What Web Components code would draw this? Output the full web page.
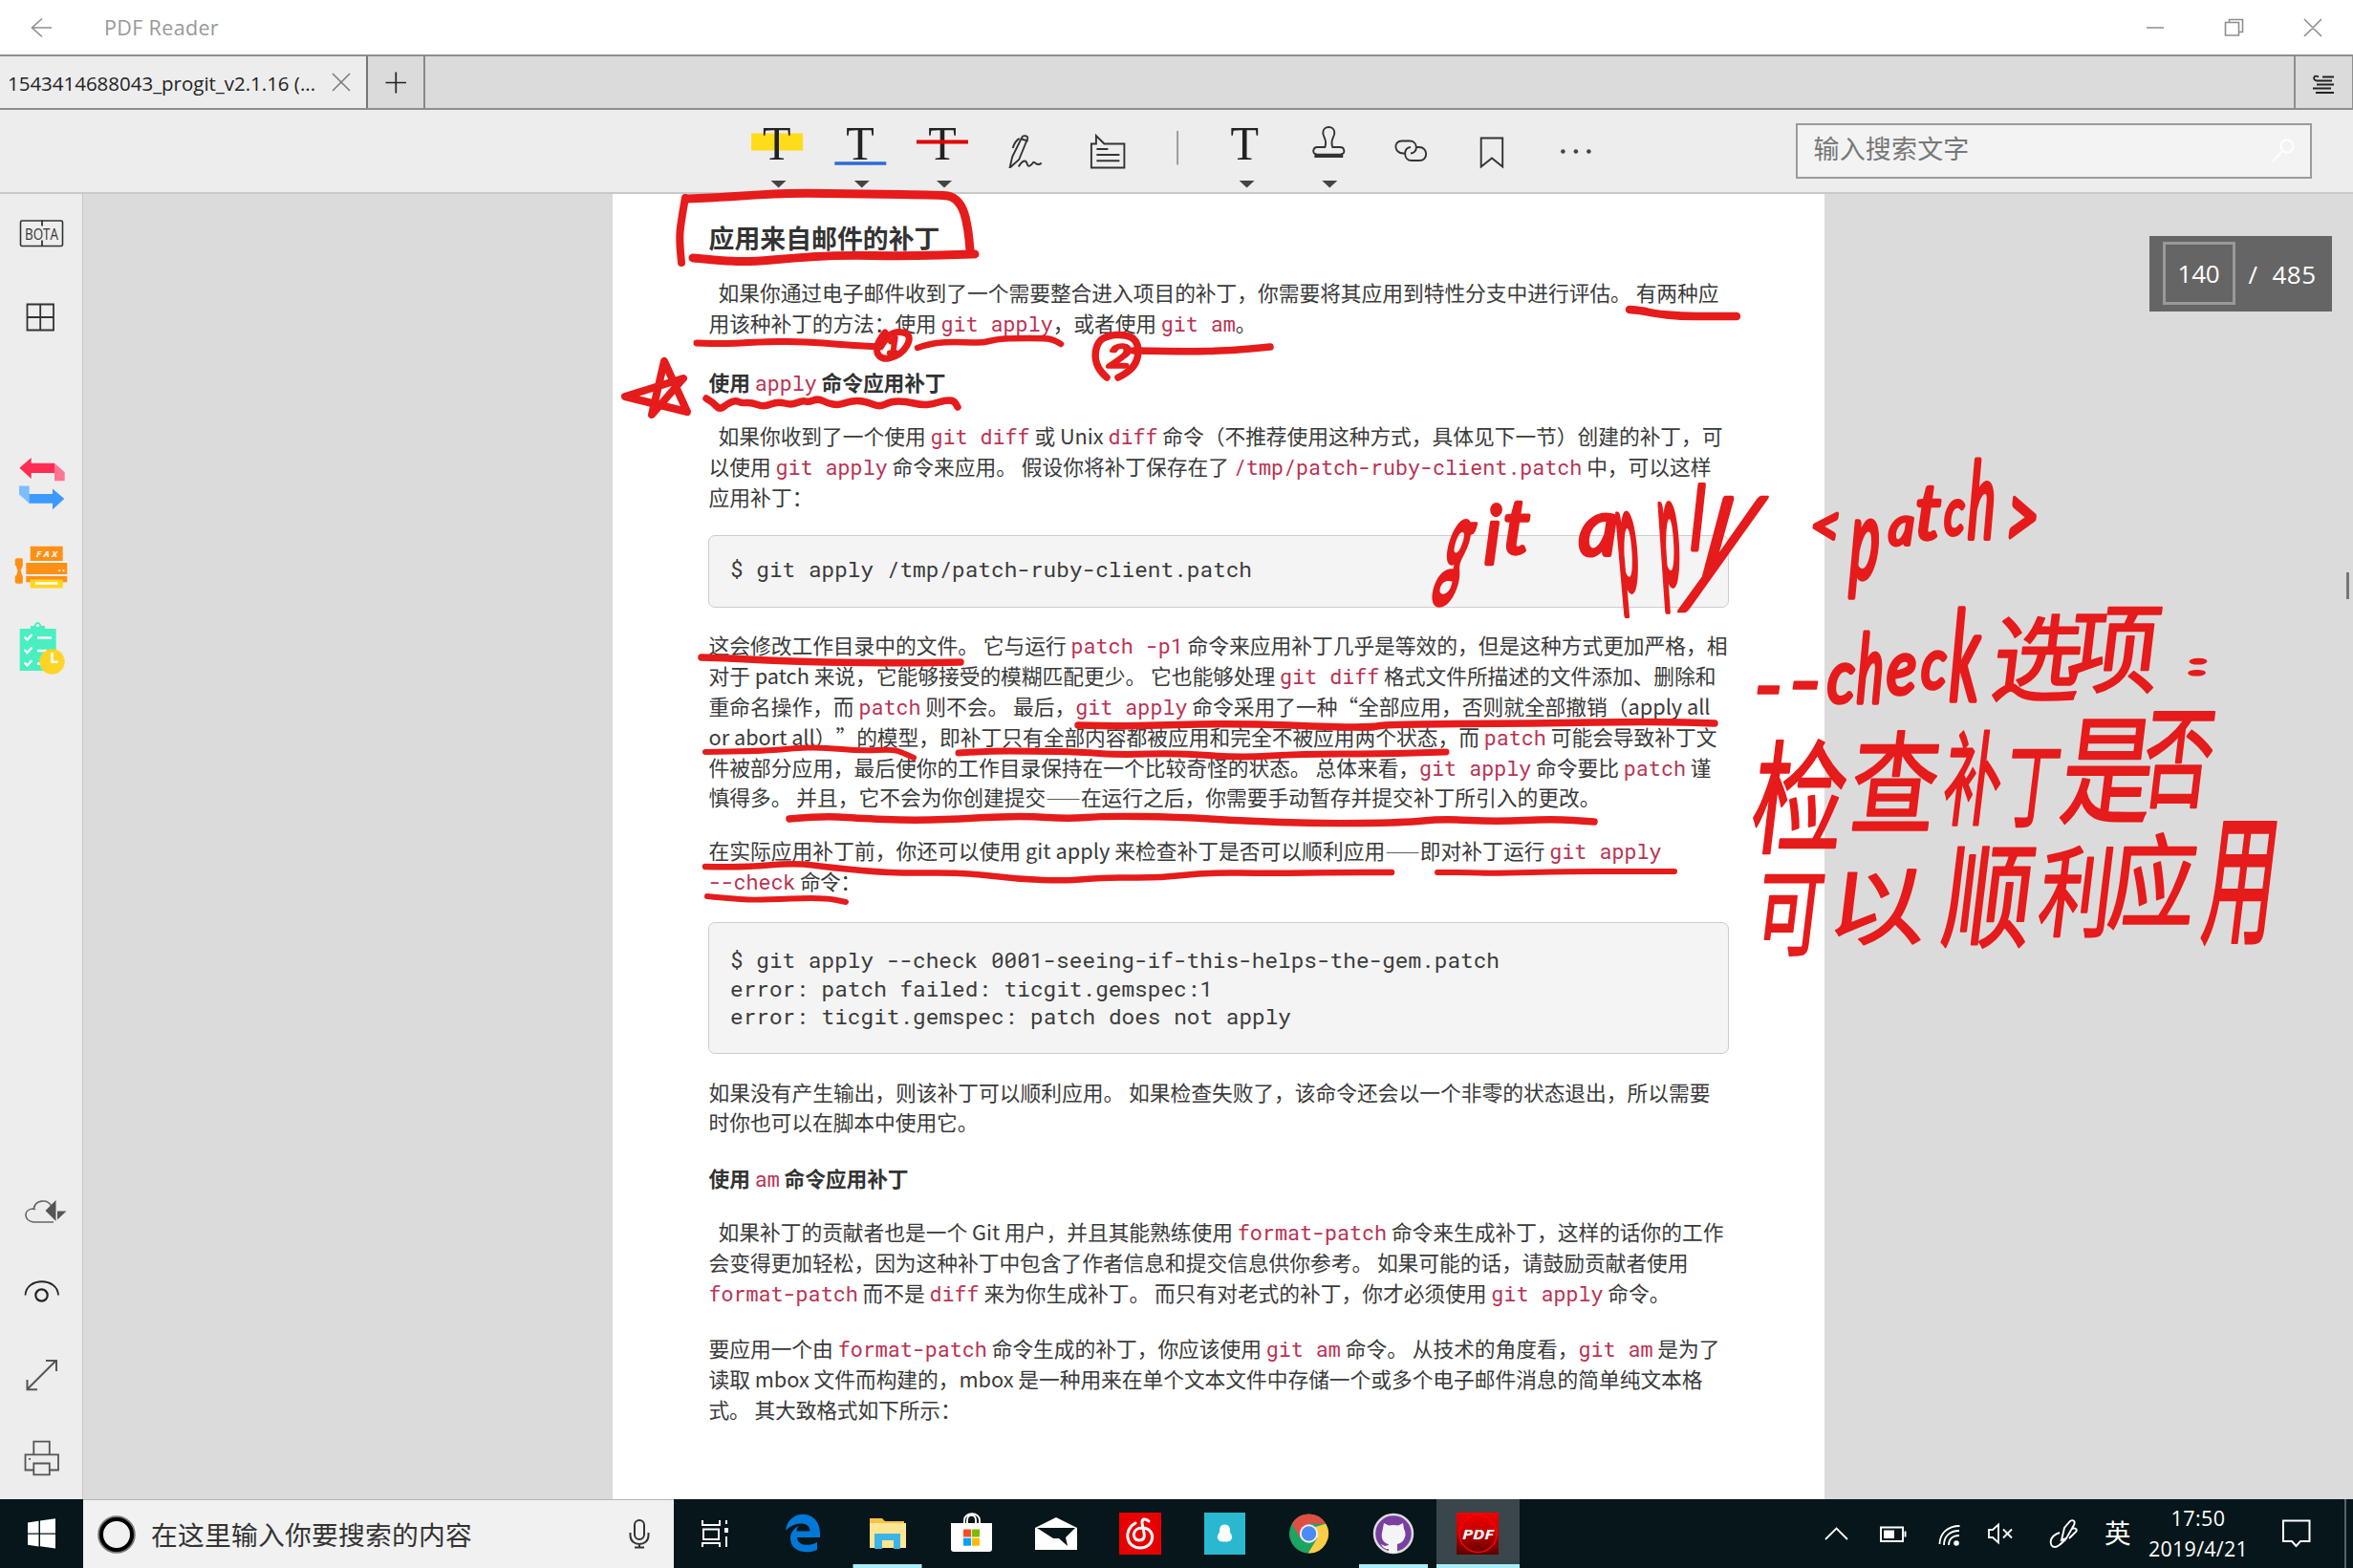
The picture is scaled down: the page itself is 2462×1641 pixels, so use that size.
<!DOCTYPE html>
<html lang="zh-CN">
<head>
<meta charset="utf-8">
<title>PDF Reader</title>
<style>
html,body{margin:0;padding:0;width:2462px;height:1641px;overflow:hidden;background:#dbdbdb;font-family:"Noto Sans CJK SC",sans-serif}
</style>
</head>
<body>
<reader-app></reader-app>

<script>
const UI = '"Open Sans","Noto Sans CJK SC",sans-serif';
const lines = [];
function define(name, html, setup) {
  const tpl = document.createElement('template');
  tpl.innerHTML = html;
  customElements.define(name, class extends HTMLElement {
    connectedCallback() {
      if (this.shadowRoot) return;
      this.attachShadow({mode: 'open'}).appendChild(tpl.content.cloneNode(true));
      if (setup) setup(this, this.shadowRoot);
    }
  });
}

/* Tracks a line so that it fills the width in its "w" attribute */
function fitLine(el) {
  const w = parseFloat(el.getAttribute('w'));
  const span = el.shadowRoot.querySelector('span');
  let n = el.textContent.length;
  el.querySelectorAll('code-token').forEach(c => n -= c.textContent.length);
  if (!w || n < 1) return;
  span.style.letterSpacing = ((w - span.getBoundingClientRect().width) / n) + 'px';
}

/* Inline monospace token inside a paragraph */
define('code-token', `<style>:host{font-family:"Roboto Mono","Noto Sans Mono","Noto Sans Mono CJK SC","Liberation Mono",monospace;color:#ba3253;font-size:21.7px;font-weight:400;line-height:0;letter-spacing:0}</style><slot></slot>`);

define('text-line', `<style>:host{display:block;white-space:pre;height:var(--lh,auto);line-height:var(--lh,normal);text-spacing-trim:space-all}span{display:inline-block}</style><span><slot></slot></span>`,
  el => lines.push(el));

define('title-bar', `<style>
:host{display:flex;align-items:center;justify-content:space-between;height:57px;background:#fff;font:21.5px ${UI};color:#999;border-bottom:2px solid #8e8e8e}
div{display:flex;align-items:center}text-line{margin-left:24px}
svg{display:block;fill:none;stroke:#8e8e8e;stroke-width:1.6}
</style>
<div><svg width="85" height="57"><path d="M54 29H33.5M44 19.5L33.5 29L44 38.5"/></svg><text-line w="120">PDF Reader</text-line></div>
<svg width="262" height="57" viewBox="2200 0 262 57"><path d="M2246 29h18M2328.500 23.500h14v13.500h-14zM2332.500 23.500v-3h14v13h-4M2411 20l18 18M2429 20l-18 18"/></svg>`);

define('tab-bar', `<style>
:host{display:flex;height:54px;border-bottom:2px solid #8e8e8e;background:#dbdbdb;font:20.5px ${UI};color:#222}
.tab{display:flex;align-items:center;box-sizing:border-box;width:385px;padding-left:8px;background:#ededed;border-right:2px solid #777}
.tab svg{margin-left:17px}
.tab text-line{margin-top:2px}
.add{width:58px;border-right:2px solid #888}.fill{flex:1}
.more{width:59px;border-left:2px solid #8e8e8e;border-right:1px solid #8e8e8e}
svg{display:block;fill:none}
</style>
<div class="tab"><text-line w="322">1543414688043_progit_v2.1.16 (...</text-line><svg width="20" height="20" stroke="#777" stroke-width="1.5"><path d="M1 1L19 19M19 1L1 19"/></svg></div>
<div class="add"><svg width="58" height="54" viewBox="385 59 58 54" stroke="#222" stroke-width="1.7"><path d="M403.500 86.500h21.500M414.300 75.500v22"/></svg></div>
<div class="fill"></div>
<div class="more"><svg width="59" height="54" viewBox="2402 59 59 54" stroke="#222" stroke-width="1.8"><path d="M2430 80.500h12M2424 84.500h16M2424 88.500h18M2420 92.500h19M2423 97h19M2424 84.500c-5-1-3-7 2-4"/></svg></div>`);

define('tool-bar', `<style>
:host{display:flex;height:86px;border-bottom:2px solid #c9c9c9;background:#ededed;color:#777;font:27px ${UI}}
.tools{display:flex;margin-left:770.4px;flex:1}
svg{display:block;flex:none;fill:none;stroke:#333;stroke-width:1.9}
text{font-family:"Liberation Serif",serif;font-size:51px;fill:#222;stroke:none}
.c{fill:#444;stroke:none}
.box{display:flex;align-items:center;box-sizing:border-box;width:540px;height:58px;margin:14px 43.500px 0 0;border:2px solid #9b9b9b;background:#f3f3f3;padding:0 16px 0 17px;justify-content:space-between}
.box text-line{margin-top:-7px}
.box svg{stroke:#fff;stroke-width:2}
</style>
<div class="tools">
<svg width="86.300" height="86" viewBox="770.400 115 86.300 86"><path d="M786.500 139.500h54v18h-54z" fill="#ffdc1a" stroke="none"/><text x="798.500" y="167" textLength="29.500" lengthAdjust="spacingAndGlyphs">T</text><path class="c" d="M807 189h16l-8 7.500z"/></svg>
<svg width="86.300" height="86" viewBox="856.700 115 86.300 86"><text x="885" y="167" textLength="29.500" lengthAdjust="spacingAndGlyphs">T</text><path d="M873 171h54" stroke="#2b6cd4" stroke-width="3.600"/><path class="c" d="M893.500 189h16l-8 7.500z"/></svg>
<svg width="86.300" height="86" viewBox="943 115 86.300 86"><text x="971.300" y="167" textLength="29.500" lengthAdjust="spacingAndGlyphs">T</text><path d="M959 148.500h54" stroke="#e00000" stroke-width="4"/><path class="c" d="M980 189h16l-8 7.500z"/></svg>
<svg width="86.300" height="86" viewBox="1029.300 115 86.300 86" stroke-width="2.100"><path d="M1057 175l2.500-11 10-20c1-3 7-2 6 1l-9 22-9 8zM1069 145.500l7 2M1067 145c-3 1-6 6-7 10M1066 174.500c5-8 8-7 9-3s4 2 6-1 4 5 9 0"/></svg>
<svg width="86.300" height="86" viewBox="1115.600 115 86.300 86"><path d="M1141.500 150.500h5v-8.500l8.500 8.500h21v25h-34.500zM1147 156h12M1147 162h24M1147 168.300h24"/></svg>
<svg width="57.500" height="86" viewBox="1201.900 115 57.500 86"><path d="M1232 137v35.500" stroke="#999"/></svg>
<svg width="86.300" height="86" viewBox="1259.400 115 86.300 86"><text x="1288" y="167" textLength="29.500" lengthAdjust="spacingAndGlyphs">T</text><path class="c" d="M1297 189h16l-8 7.500z"/></svg>
<svg width="86.300" height="86" viewBox="1345.700 115 86.300 86"><path d="M1386 154c3-8-2-10-2-15 0-8 12-8 12 0 0 5-5 7-2 15h8c5 0 5 7 2 7v3h-28v-3c-3 0-3-7 2-7z"/><path d="M1376 162.500h28" stroke-width="3.500"/><path class="c" d="M1383 189h16l-8 7.500z"/></svg>
<svg width="86.300" height="86" viewBox="1432 115 86.300 86" stroke-width="2.300"><path d="M1470 160.500h-2c-9 0-11-13-1-13h8c9 0 9 13 1 13M1482 154h3c9 0 10 14 0 14h-8c-9 0-9-14-1-14"/></svg>
<svg width="86.300" height="86" viewBox="1518.300 115 86.300 86"><path d="M1550 144.500h22.500v30l-11.200-9-11.300 9z"/></svg>
<svg width="86.300" height="86" viewBox="1604.600 115 86.300 86"><g class="c"><circle cx="1635" cy="158.500" r="2.300"/><circle cx="1648.500" cy="158.500" r="2.300"/><circle cx="1662" cy="158.500" r="2.300"/></g></svg>
</div>
<div class="box"><text-line w="163">输入搜索文字</text-line><svg width="24" height="26"><circle cx="16" cy="8" r="6.500"/><path d="M11 13L1 24"/></svg></div>`);

define('side-bar', `<style>
:host{display:block;box-sizing:border-box;width:87px;background:#ededed;border-right:1.500px solid #c6c6c6}
svg{display:block;fill:none;stroke:#333;stroke-width:1.800}
text{stroke:none;font-family:${UI}}
</style>
<svg style="margin-top:10.500px" width="85" height="60" viewBox="0 213.500 85 60"><rect x="21.500" y="230.500" width="44" height="26.500" rx="1.500" stroke-width="1.600"/><path d="M44 230v6M44 251v6"/><text x="26" y="250.300" font-size="15.500" textLength="35" lengthAdjust="spacingAndGlyphs" fill="#333">BOTA</text></svg>
<svg style="margin-top:28px" width="85" height="60" viewBox="0 301.500 85 60" stroke-width="2.200"><path d="M28.500 318h27.500v27h-27.500zM42.200 318v27M28.500 331.500h27.500"/></svg>
<svg style="margin-top:114px" width="85" height="60" viewBox="0 475.500 85 60" stroke="none"><path d="M20.300 489.300L32.700 478.500v5.800H57v10.200H32.700v6z" fill="#ff2d55" stroke="none"/><path d="M57 484.300l10.700 9.500v9H57z" fill="#ff7591" stroke="none"/><path d="M67.300 521.500L55 511v5.600H30v9.700h25v6.500z" fill="#3c99ff" stroke="none"/><path d="M20 508h10.700v18.300L20 517z" fill="#7dbdff" stroke="none"/></svg>
<svg style="margin-top:26.500px" width="85" height="60" viewBox="0 562 85 60"><g stroke="none"><path d="M31.700 571.700h34v15.500h-34zM27.300 589h43v12h-43zM27.300 603h43v6.300h-43zM17 584.500h6.500v8.500l-1.800 4 1.800 6v7.500H17V603l1.500-6-1.500-4z" fill="#ff9017"/><path d="M15.700 586q0-1.500 1.500-1.500h5q1.500 0 1.500 1.500v6h-8zM15.700 602.500h8v6q0 2-1.500 2h-5q-1.500 0-1.500-2z" fill="#ff9017"/><path d="M31.700 606.500h34v9h-34z" fill="#ffd61f"/><path d="M28 587.300h42.500v1.200H28zM37 609.300h23.300v2.500H37z" fill="#fff"/><circle cx="62" cy="597" r="1" fill="#fff"/><circle cx="66.500" cy="597" r="1" fill="#fff"/></g><text x="38" y="583.300" font-size="9.500" font-weight="700" font-style="italic" textLength="22" fill="#fff">FAX</text></svg>
<svg style="margin-top:28px" width="85" height="60" viewBox="0 650 85 60"><path d="M20.700 658h11.300v-3h3.700c1-5.500 6.500-5.500 7.500 0h3.800v3h11.700v44H20.700z" fill="#49efc0" stroke="none"/><circle cx="39.500" cy="654.700" r="1.600" fill="#fff" stroke="none"/><path d="M25.500 666.500l3 3 5-5.500M25.500 680l3 3 5-5.500M25.500 693.500l3 3 5-5.500M39 667.500h15M39 681h10M39 694.500h5" stroke="#fff" stroke-width="2.300"/><circle cx="54.500" cy="692.500" r="13.200" fill="#ffd426" stroke="none"/><path d="M54.500 683v9.700h6" stroke="#fff" stroke-width="2.500"/></svg>
<svg style="margin-top:528px" width="85" height="60" viewBox="0 1238 85 60"><path d="M56 1279H35c-10-1-11-13-1-14 0 0 2 0 3 1M35.500 1265c1-9 14-11 18-3" stroke="#666" stroke-width="1.600"/><path d="M47.500 1267L58.500 1256v22zM60 1267.500h9.500l-9.500 9z" fill="#555" stroke="none"/></svg>
<svg style="margin-top:23px" width="85" height="60" viewBox="0 1321 85 60"><path d="M26.500 1355.500c1-19 33.500-19 34.500 0" stroke="#222"/><circle cx="43.500" cy="1355.500" r="6.200" stroke="#222" stroke-width="2.200"/></svg>
<svg style="margin-top:27px" width="85" height="60" viewBox="0 1408 85 60"><path d="M28.500 1454L58.500 1424M48 1424h11v11M28.500 1444v10.300h10.500" stroke="#555" stroke-width="2"/></svg>
<svg style="margin-top:27px" width="85" height="60" viewBox="0 1495 85 60"><path d="M35.300 1522v-13.300h16.500v13.300M35 1538.500h-8.500v-16.200h34.500v16.200h-9M35.300 1531.500h16.500v11.800h-16.500zM30 1526.800h2" stroke="#555"/></svg>`);

define('code-block', `<style>
:host{display:block;box-sizing:border-box;width:1068px;margin-left:-1px;border:1.500px solid #cdcdcd;border-radius:7px;background:#f4f4f4;padding-left:22.500px;font-family:"Roboto Mono","Noto Sans Mono","Noto Sans Mono CJK SC","Liberation Mono",monospace;font-size:22.700px;color:#3b3b3b;--lh:29.600px}
</style><slot></slot>`);

define('doc-page', `<style>
:host{display:block;box-sizing:border-box;width:1268px;background:#fff;padding:26px 0 0 100.500px;font-family:"Noto Sans CJK SC",sans-serif;font-size:21.750px;color:#3a3a3a;--lh:31.850px}
section{display:block}
h2,h3{margin:0;color:#333;font-weight:700}
h2{font-size:26.800px;--lh:40px}
h3{font-size:21.750px}
.in{padding-left:10px}
i{font-style:normal;font-size:18.300px}
</style>
<h2><text-line w="242">应用来自邮件的补丁</text-line></h2>
<section style="margin-top:21px">
<text-line class="in" w="1047">如果你通过电子邮件收到了一个需要整合进入项目的补丁，你需要将其应用到特性分支中进行评估。 有两种应</text-line>
<text-line w="573">用该种补丁的方法：使用 <code-token>git apply</code-token>，或者使用 <code-token>git am</code-token>。</text-line>
</section>
<h3 style="margin-top:30px"><text-line w="248">使用 <code-token>apply</code-token> 命令应用补丁</text-line></h3>
<section style="margin-top:24.500px">
<text-line class="in" w="1051">如果你收到了一个使用 <code-token>git diff</code-token> 或 Unix <code-token>diff</code-token> 命令（不推荐使用这种方式，具体见下一节）创建的补丁，可</text-line>
<text-line w="1049">以使用 <code-token>git apply</code-token> 命令来应用。 假设你将补丁保存在了 <code-token>/tmp/patch-ruby-client.patch</code-token> 中，可以这样</text-line>
<text-line w="109">应用补丁：</text-line>
</section>
<code-block style="margin-top:24px;height:76px;padding-top:20.500px"><text-line w="546">$ git apply /tmp/patch-ruby-client.patch</text-line></code-block>
<section style="margin-top:23.700px">
<text-line w="1066">这会修改工作目录中的文件。 它与运行 <code-token>patch -p1</code-token> 命令来应用补丁几乎是等效的，但是这种方式更加严格，相</text-line>
<text-line w="1054">对于 patch 来说，它能够接受的模糊匹配更少。 它也能够处理 <code-token>git diff</code-token> 格式文件所描述的文件添加、删除和</text-line>
<text-line w="1048">重命名操作，而 <code-token>patch</code-token> 则不会。 最后，<code-token>git apply</code-token> 命令采用了一种“全部应用，否则就全部撤销（apply all</text-line>
<text-line w="1055">or abort all）”的模型，即补丁只有全部内容都被应用和完全不被应用两个状态，而 <code-token>patch</code-token> 可能会导致补丁文</text-line>
<text-line w="1049">件被部分应用，最后使你的工作目录保持在一个比较奇怪的状态。 总体来看，<code-token>git apply</code-token> 命令要比 <code-token>patch</code-token> 谨</text-line>
<text-line w="933">慎得多。 并且，它不会为你创建提交<i>——</i>在运行之后，你需要手动暂存并提交补丁所引入的更改。</text-line>
</section>
<section style="margin-top:23.800px">
<text-line w="997">在实际应用补丁前，你还可以使用 git apply 来检查补丁是否可以顺利应用<i>——</i>即对补丁运行 <code-token>git apply</code-token></text-line>
<text-line w="159"><code-token>--check</code-token> 命令：</text-line>
</section>
<code-block style="margin-top:27.300px;height:138px;padding-top:24px">
<text-line w="805">$ git apply --check 0001-seeing-if-this-helps-the-gem.patch</text-line>
<text-line w="505">error: patch failed: ticgit.gemspec:1</text-line>
<text-line w="587">error: ticgit.gemspec: patch does not apply</text-line>
</code-block>
<section style="margin-top:23.500px">
<text-line w="1048">如果没有产生输出，则该补丁可以顺利应用。 如果检查失败了，该命令还会以一个非零的状态退出，所以需要</text-line>
<text-line w="282">时你也可以在脚本中使用它。</text-line>
</section>
<h3 style="margin-top:27px"><text-line w="209">使用 <code-token>am</code-token> 命令应用补丁</text-line></h3>
<section style="margin-top:24.200px">
<text-line class="in" w="1052">如果补丁的贡献者也是一个 Git 用户，并且其能熟练使用 <code-token>format-patch</code-token> 命令来生成补丁，这样的话你的工作</text-line>
<text-line w="1025">会变得更加轻松，因为这种补丁中包含了作者信息和提交信息供你参考。 如果可能的话，请鼓励贡献者使用</text-line>
<text-line w="1006"><code-token>format-patch</code-token> 而不是 <code-token>diff</code-token> 来为你生成补丁。 而只有对老式的补丁，你才必须使用 <code-token>git apply</code-token> 命令。</text-line>
</section>
<section style="margin-top:26.500px">
<text-line w="1058">要应用一个由 <code-token>format-patch</code-token> 命令生成的补丁，你应该使用 <code-token>git am</code-token> 命令。 从技术的角度看，<code-token>git am</code-token> 是为了</text-line>
<text-line w="1040">读取 mbox 文件而构建的，mbox 是一种用来在单个文本文件中存储一个或多个电子邮件消息的简单纯文本格</text-line>
<text-line w="264">式。 其大致格式如下所示：</text-line>
</section>`);

/* Ink strokes: [width, points...]; a smooth curve is run through the points */
const STROKES = [
 [8,717,207,712,235,711,252,713,275],[9,719,208,747,207,790,204,830,202,901,203,985,204,998,206,1008,218,1013,240,1015,262],
 [9,725,270,756,273,786,274,830,270,877,267,948,268,1020,266],
 [7,729,359,760,360,790,358,838,357,885,361,921,363],
 [6.5,960,364,972,360,988,358,1010,358,1027,359,1043,355,1059,354,1095,354,1103,356,1110,360],
 [7.5,1186,367,1240,368,1287,367,1329,363],
 [8.5,1705,324,1718,325,1730,328,1758,331,1790,331,1817,331],
 [7.5,739,417,746,421,753,429,762,422,770,419,776,422,786,421,799,426,814,420,828,424,840,419,846,421,856,417,866,422,877,424,886,421,897,419,908,421,921,426,932,420,948,420,964,424,976,423,988,419,998,419,1002,426],
 [7.5,734,688,767,689,800,691,860,693,950,694,1005,693],
 [7.5,1128,759,1170,760,1211,759,1297,757,1400,761,1436,761,1452,758,1607,757,1730,755,1794,757],
 [6,738,787,803,786,830,783,860,782,901,786,934,784,945,788,956,793],
 [7,1003,788,1032,786,1080,786,1130,787,1171,790,1232,788,1297,793,1362,789,1444,789,1513,787],
 [7.5,826,857,860,854,893,856,958,859,1020,856,1073,854,1118,857,1154,854,1232,855,1300,859,1379,862,1469,861,1509,857,1566,860,1624,857,1668,860],
 [6.5,738,907,775,908,832,903,869,908,934,914,1007,913,1064,920,1118,922,1154,918,1211,919,1264,913,1330,914,1403,913,1456,913],
 [6,1504,913,1535,913,1562,914,1644,912,1700,912,1752,912],
 [6,740,938,770,941,795,942,860,939,885,944],
 [7,926,348,918,358,917,370,924,376,936,374,946,367,952,356,950,349,940,347,930,350,922,362],
 [7.5,1158,395,1150,388,1145,373,1149,357,1160,351,1177,350,1188,355,1192,367,1188,382,1178,391,1170,395]
];
/* Handwritten notes: glyph, the box it is written in (x0,y0,x1,y1), and its lean */
const NOTES = [
 ['g',1499,545,1543,636,.25],['i',1553,526,1572,592],['t',1573,524,1602,582],
 ['a',1651,537,1692,584],['p',1688,537,1720,645,-.12],['p',1732,526,1763,640,-.1],['l',1769,506,1785,577],['y',1762,520,1841,640,.42],
 ['<',1896,535,1924,566],['p',1933,544,1967,627],['a',1975,540,2003,573],['t',2004,508,2032,567],['c',2033,523,2057,562],['h',2058,480,2088,565],['>',2101,519,2132,565],
 ['-',1838,717,1863,727],['-',1875,712,1903,722],['c',1911,694,1942,738],['h',1942,661,1971,737],['e',1973,684,2005,729],['c',2009,681,2038,723],['k',2039,636,2075,735],
 ['选',2085,641,2181,736],['项',2162,634,2262,727],['：',2291,688,2308,709],
 ['检',1832,772,1935,896],['查',1936,763,2031,870],['补',2032,763,2098,866],['丁',2098,784,2155,867],['是',2156,752,2256,864],['否',2241,743,2318,847],
 ['可',1838,915,1908,1001],['以',1920,909,2017,990],['顺',2032,885,2129,995],['利',2132,884,2210,982],['应',2206,870,2300,975],['用',2304,858,2380,992],
 ['1',928,351,941,372],['2',1157,359,1184,386]
];
define('ink-layer', `<style>
:host{position:absolute;left:0;top:203px;width:2462px;height:1366px;overflow:visible;pointer-events:none}
svg{position:absolute;left:0;top:-12px}
path{fill:none;stroke:#e61b1b;stroke-linecap:round;stroke-linejoin:round}
text{fill:#e61b1b;stroke:#e61b1b;stroke-linejoin:round}
</style><svg width="2462" height="1378" viewBox="0 191 2462 1378"><path d="M695 378L682 434L715 396L654 415L719 431Z" stroke-width="8"/></svg>`,
 (el, root) => {
  const svg = root.querySelector('svg'), NS = 'http://www.w3.org/2000/svg';
  for (const [w, ...p] of STROKES) {
    let d = 'M' + p[0] + ' ' + p[1], i = 2;
    for (; i < p.length - 2; i += 2)
      d += ` Q${p[i]} ${p[i+1]} ${(p[i]+p[i+2])/2} ${(p[i+1]+p[i+3])/2}`;
    d += ` L${p[i]} ${p[i+1]}`;
    const e = document.createElementNS(NS, 'path');
    e.setAttribute('d', d); e.setAttribute('stroke-width', w); svg.appendChild(e);
  }
  const ctx = document.createElement('canvas').getContext('2d');
  for (const [ch, x0, y0, x1, y1, slant] of NOTES) {
    const cjk = ch.charCodeAt(0) > 255;
    const font = cjk ? '400 100px "Noto Sans CJK SC"' : 'italic 400 100px Lato';
    const sw = ch === '：' ? 5 : cjk ? 2 : ch === '-' ? 2 : 4, k = slant ?? (cjk ? 0.12 : 0.03);
    ctx.font = font;
    const m = ctx.measureText(ch);
    const L = -m.actualBoundingBoxLeft, R = m.actualBoundingBoxRight, T = -m.actualBoundingBoxAscent, B = m.actualBoundingBoxDescent;
    const h = y1 - y0 - sw, w = x1 - x0 - sw;
    const lean = Math.abs(k) * h;
    const sx = Math.max((w - lean * .6), 8) / (R - L), sy = h / (B - T);
    const c = -k * sy;
    /* centre the slanted glyph in its box */
    const ex = (x0 + x1) / 2 - sx * (L + R) / 2 - c * (T + B) / 2;
    const ey = y0 + sw / 2 - sy * T;
    const e = document.createElementNS(NS, 'text');
    e.textContent = ch;
    e.style.font = font;
    e.style.strokeWidth = sw / Math.sqrt(sx * sy) + 'px';
    e.setAttribute('transform', `matrix(${sx} 0 ${c} ${sy} ${ex} ${ey})`);
    svg.appendChild(e);
  }
 });

define('page-counter', `<style>
:host{position:absolute;right:22px;top:246.500px;box-sizing:border-box;width:191.500px;height:79px;background:#656565;display:flex;align-items:center;color:#fff;font:26px ${UI};padding-left:14px}
.n{box-sizing:border-box;width:76px;height:66px;border:3.500px solid #999;display:flex;justify-content:center;align-items:center}
.s{margin:2px 0 0 14px}.t{margin:2px 0 0 13px}
</style><div class="n"><text-line w="44">140</text-line></div><text-line class="s" w="12">/</text-line><text-line class="t" w="46">485</text-line>`);

define('scroll-thumb', `<style>:host{position:absolute;right:4px;top:599px;width:3px;height:28px;background:#777}</style>`);

define('task-bar', `<style>
:host{display:flex;box-sizing:border-box;height:72px;background:#06161a;color:#fff;font-family:${UI}}
svg{display:block;flex:none;fill:none}
.find{display:flex;align-items:center;box-sizing:border-box;width:618px;background:#f1f1f1;border-top:1px solid #b5b5b5;color:#333;font-size:27.800px;padding-left:14px}
.find text-line{margin:-2px 0 0 15px;flex:1}
.apps{display:flex}.on{background:#3b464b}
.tray{display:flex;margin-left:302px;align-items:center}
.ime{width:26px;font:27.500px "Noto Sans CJK SC",sans-serif;margin-top:-4px;margin-right:0}
.clock{width:144px;display:flex;flex-direction:column;align-items:center;font-size:21.500px;--lh:32.500px}
.edge{width:1.500px;margin-left:19px;background:#566;align-self:stretch}
.p{font:italic 700 13.500px "Open Sans",sans-serif}
</style>
<svg width="87" height="72" viewBox="0 1569 87 72" fill="#fff"><path fill="#fff" d="M29 1593.500l11.500-1.700v12.700H29zM42 1591.600l16-2.300v15.200H42zM29 1605.700h11.500v12.800L29 1616.800zM42 1605.700h16v14.800l-16-2.200z"/></svg>
<div class="find"><svg width="42" height="42"><circle cx="21" cy="21" r="17.300" stroke="#777" stroke-width="5"/><circle cx="21" cy="21" r="16" stroke="#000" stroke-width="4"/></svg><text-line w="336">在这里输入你要搜索的内容</text-line>
<svg width="72" height="71" viewBox="633 1570 72 71" stroke="#333" stroke-width="2"><rect x="664" y="1591" width="10" height="20" rx="5"/><path d="M659.500 1604v3c0 12 19 12 19 0v-3M669 1615v5M664 1619.500h10"/></svg></div>
<div class="apps">
<svg width="91" height="72" viewBox="705 1569 91 72" stroke="#fff" stroke-width="2"><path d="M735 1591v5h18v-5M736 1600.500h16v10.500h-16zM735 1619v-4h18v4M760 1591v4M760 1608v11"/><path d="M760 1599v5" stroke-width="4"/></svg>
<svg width="88" height="72" viewBox="796 1569 88 72"><path fill="#0078d7" d="M822 1602c2-23 36-24 36 3v4h-24c1 10 14 9 21 5v8c-11 5-27 2-28-11-.500-7 4-12 9-14-2 2-2.500 3.500-2.500 5.500h14c0-11-17-10-25.500-.500z"/></svg>
<svg width="88" height="72" viewBox="884 1569 88 72"><path fill="#f6c343" d="M910 1589h13l3 3h20v5h-36z"/><path fill="#ffe694" d="M910 1594h38v26h-38z"/><path fill="#3cb4e7" d="M915 1605h27v16h-7v-9h-12v9h-8z"/><path fill="#a8eef8" d="M892.500 1637h72v4h-72z"/></svg>
<svg width="88" height="72" viewBox="972 1569 88 72"><path fill="#fff" d="M995 1594h43v27q0 3-3 3h-37q-3 0-3-3z"/><path stroke="#fff" stroke-width="2" d="M1009 1595v-4c0-9 16-9 16 0v4M1012 1594v-3c0-7 9-7 9 0v3"/><path fill="#f25022" d="M1008 1600.500h8v8h-8z"/><path fill="#7fba00" d="M1017 1600.500h8v8h-8z"/><path fill="#00a4ef" d="M1008 1609.700h8v8h-8z"/><path fill="#ffb900" d="M1017 1609.700h8v8h-8z"/></svg>
<svg width="88" height="72" viewBox="1060 1569 88 72"><path fill="#fff" d="M1083 1599l22-11 22 11v23h-44z"/><path fill="#06161a" d="M1085 1599h40l-10 10 2 9-9-8h-6z"/></svg>
<svg width="88" height="72" viewBox="1148 1569 88 72"><path fill="#e60000" d="M1171 1583h44v44h-44z"/><path stroke="#fff" stroke-width="3" stroke-linecap="round" d="M1188 1594c-13 7-10 26 5 26 16 0 17-21 2-21-11 0-11 13-3 13 9 0 4-10 3-18-.500-5 4-5 7-2"/></svg>
<svg width="88" height="72" viewBox="1236 1569 88 72"><path fill="#2ab8d0" d="M1260 1583h43v44h-43z"/><path fill="#fff" d="M1281.500 1595.500c5 0 5.500 4 5.500 8 2 3 3 6 1.500 7-.500 2-1.500 3-7 3s-6.500-1-7-3c-1.500-1-.500-4 1.500-7 0-4 .500-8 5.500-8z"/></svg>
<svg width="88" height="72" viewBox="1324 1569 88 72"><circle cx="1369.500" cy="1605" r="20.500" fill="#1da362"/><path fill="#ffcd46" d="M1387.300 1594.800a20.500 20.500 0 0 1-18.600 30.700l9.500-15.500-2-12z"/><path fill="#dd5144" d="M1351.700 1594.800a20.500 20.500 0 0 1 35.600 0h-17.800v6l-9 9z"/><circle cx="1369.500" cy="1605" r="9.700" fill="#f1f1f1"/><circle cx="1369.500" cy="1605" r="7.700" fill="#4c8bf5"/></svg>
<svg width="88" height="72" viewBox="1412 1569 88 72"><circle cx="1458" cy="1605" r="20" fill="#7a3fa0" stroke="#ddd" stroke-width="2.500"/><path fill="#f4f4f4" d="M1448 1594l5 2.500q5-1 10 0l5-2.500 1 6q3 6 0 11-2 4-7 5v9h-9v-4q-5 1-8-5l4 2 4-1-.500-1q-9-3-6-14z"/><path fill="#a8eef8" d="M1422 1637h72v4h-72z"/></svg>
<svg class="on" style="margin-left:3px" width="87" height="72" viewBox="1503 1569 87 72"><defs><linearGradient id="g" x2="0" y2="1"><stop offset="0" stop-color="#f00000"/><stop offset=".45" stop-color="#c80000"/><stop offset="1" stop-color="#5a0000"/></linearGradient></defs><path fill="url(#g)" d="M1524 1583h44v44h-44z"/><circle cx="1546.500" cy="1605" r="19.500" stroke="#f00" stroke-width="1.500"/><text class="p" x="1530" y="1611" textLength="33" lengthAdjust="spacingAndGlyphs" fill="#fff">PDF</text><path fill="#a8eef8" d="M1503 1637h87v4h-87z"/></svg>
</div>
<div class="tray">
<svg width="59" height="72" viewBox="1892 1569 59 72" stroke="#fff" stroke-width="1.800"><path d="M1910 1611l11.500-11.500 11.500 11.500"/></svg>
<svg width="60" height="72" viewBox="1951 1569 60 72" stroke="#fff" stroke-width="2"><path d="M1968 1598.500h23v14.500h-23zM1993.500 1602.500v6"/><path d="M1971 1601.500h11v8.500h-11z" fill="#fff" stroke="none"/></svg>
<svg width="58" height="72" viewBox="2011 1569 58 72" stroke="#fff" stroke-width="1.800"><path d="M2029.500 1616c0-11 8-19 21-19M2034 1617c0-9 6-15 16-15M2039 1617c0-6 4-10 11-10"/><circle cx="2047" cy="1615" r="2.800" fill="#fff" stroke="none"/></svg>
<svg width="49" height="72" viewBox="2069 1569 49 72" stroke="#fff" stroke-width="1.800"><path d="M2081 1601h4l6-5.500v19l-6-5.500h-4zM2096 1600.500l9 9M2105 1600.500l-9 9"/></svg>
<svg width="84" height="72" viewBox="2118 1569 84 72" stroke="#fff" stroke-width="1.900"><path d="M2157 1612l3-13 6-7c3-2 6 0 4 4l-8 14zM2168 1600c5-2 6 2 3 4l-6 6M2155 1604c-12 4-11 15-5 15 5 0 8-6 12-8"/></svg>
<text-line class="ime">英</text-line>
<div class="clock"><text-line w="57">17:50</text-line><text-line w="104">2019/4/21</text-line></div>
<svg width="62" height="72" viewBox="2372 1569 62 72" stroke="#fff" stroke-width="2"><path d="M2389 1591.500h27.500v21.500h-9.500l-4.500 5-4.500-5h-9z"/></svg>
<div class="edge"></div>
</div>`);

define('reader-app', `<style>
:host{position:relative;display:flex;flex-direction:column;width:2462px;height:1641px;overflow:hidden;background:#dbdbdb}
.main{display:flex;height:1366px;overflow:hidden}
doc-page{margin-left:554px}
</style>
<title-bar></title-bar><tab-bar></tab-bar><tool-bar></tool-bar>
<div class="main"><side-bar></side-bar><doc-page></doc-page></div>
<task-bar></task-bar>
<ink-layer></ink-layer><page-counter></page-counter><scroll-thumb></scroll-thumb>`);

lines.forEach(fitLine);
</script>
</body>
</html>
